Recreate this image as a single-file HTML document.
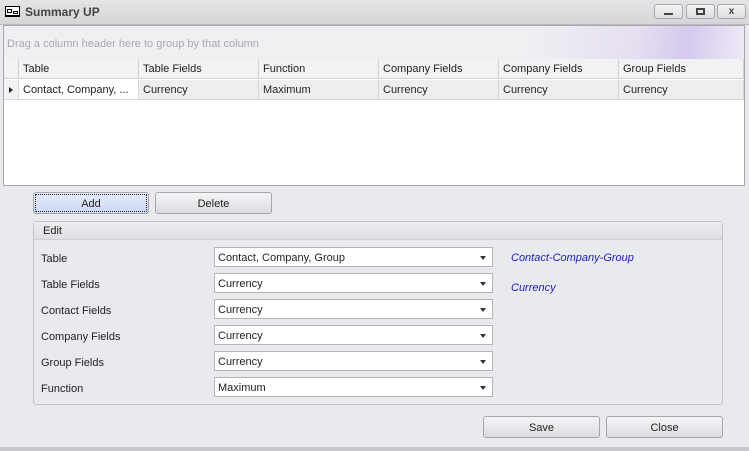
<!DOCTYPE html>
<html><head><style>
*{box-sizing:border-box;margin:0;padding:0}
body{width:749px;height:451px;background:#e9eaee;font-family:"Liberation Sans",sans-serif;font-size:11px;color:#222;position:relative;overflow:hidden}
.a{position:absolute}
.title{left:0;top:0;width:749px;height:25px;background:linear-gradient(#e4e4e6,#d6d6d9);border-bottom:1px solid #b9b9bd}
.tb{top:4px;width:29px;height:15px;border:1px solid #a8a8ad;border-radius:3px;background:linear-gradient(#f4f4f5,#dedee1)}
.grid{left:3px;top:25px;width:742px;height:161px;background:#fff;border:1px solid #a9a9ad}
.grp{left:0;top:0;width:740px;height:33px;background:linear-gradient(100deg,#f0f0f3 70%,#e6dff0 85%,#d5c9ee 92%,#efeaf7 100%);color:#a8a8b0;padding:12px 0 0 3px}
.hdr{top:33px;height:20px;background:#f2f2f4;border-right:1px solid #d3d3d6;border-bottom:1px solid #d3d3d6;padding:4px 0 0 4px}
.cell{top:54px;height:20px;background:#eeeef1;border-right:1px solid #d8d8db;border-bottom:1px solid #d8d8db;padding:4px 0 0 4px}
.btn{height:22px;border:1px solid #a6a6ab;border-radius:3px;background:linear-gradient(#f5f5f7,#dcdce0);text-align:center;padding-top:5px}
.lbl{left:41px;margin-top:1px}
.cb{left:214px;width:279px;height:20px;background:#fff;border:1px solid #b5b5b9;padding:4px 0 0 3px}
.cb:after{content:"";position:absolute;right:6px;top:8px;border-left:3.5px solid transparent;border-right:3.5px solid transparent;border-top:4px solid #333}
.blue{color:#1a1acc;font-style:italic;left:511px}
</style></head><body>
<div class="a title">
<div class="a" style="left:5px;top:6px;width:15px;height:11px;border:1px solid #000;background:#fff"><div class="a" style="left:1px;top:2px;width:5px;height:4px;border:1px solid #000"></div><div class="a" style="left:7px;top:4px;width:5px;height:3px;border:1px solid #000"></div><div class="a" style="left:0;top:8px;width:13px;height:1px;background:#000"></div></div>
<div class="a" style="left:25px;top:5px;font-weight:bold;color:#444;font-size:12px">Summary UP</div>
<div class="a tb" style="left:654px"><div class="a" style="left:9px;top:8px;width:9px;height:2px;background:#444"></div></div>
<div class="a tb" style="left:686px"><div class="a" style="left:9px;top:3px;width:9px;height:7px;border:2px solid #444"></div></div>
<div class="a tb" style="left:717px;text-align:center;font-weight:bold;color:#444;font-size:10px;padding-top:1px">x</div>
</div>
<div class="a grid">
<div class="a grp">Drag a column header here to group by that column</div>
<div class="a hdr" style="left:0;width:15px"></div>
<div class="a hdr" style="left:15px;width:120px">Table</div>
<div class="a hdr" style="left:135px;width:120px">Table Fields</div>
<div class="a hdr" style="left:255px;width:120px">Function</div>
<div class="a hdr" style="left:375px;width:120px">Company Fields</div>
<div class="a hdr" style="left:495px;width:120px">Company Fields</div>
<div class="a hdr" style="left:615px;width:125px">Group Fields</div>
<div class="a cell" style="left:0;width:15px;background:#f2f2f4"><div class="a" style="left:5px;top:7px;border-top:3px solid transparent;border-bottom:3px solid transparent;border-left:4px solid #222"></div></div>
<div class="a cell" style="left:15px;width:120px;background:#fff">Contact, Company, ...</div>
<div class="a cell" style="left:135px;width:120px">Currency</div>
<div class="a cell" style="left:255px;width:120px">Maximum</div>
<div class="a cell" style="left:375px;width:120px">Currency</div>
<div class="a cell" style="left:495px;width:120px">Currency</div>
<div class="a cell" style="left:615px;width:125px">Currency</div>
</div>
<div class="a btn" style="left:33px;top:192px;width:116px;background:linear-gradient(#e6ecfb,#ccd8f6);outline:1px dotted #222;outline-offset:-3px">Add</div>
<div class="a btn" style="left:155px;top:192px;width:117px">Delete</div>
<div class="a" style="left:33px;top:221px;width:690px;height:184px;border:1px solid #c3c3c8;border-radius:3px">
<div class="a" style="left:0;top:0;width:688px;height:18px;background:linear-gradient(#ececef,#e0e0e4);border-bottom:1px solid #d0d0d4;padding:3px 0 0 9px">Edit</div>
</div>
<div class="a lbl" style="top:252px">Table</div>
<div class="a lbl" style="top:278px">Table Fields</div>
<div class="a lbl" style="top:304px">Contact Fields</div>
<div class="a lbl" style="top:330px">Company Fields</div>
<div class="a lbl" style="top:356px">Group Fields</div>
<div class="a lbl" style="top:382px">Function</div>
<div class="a cb" style="top:247px">Contact, Company, Group</div>
<div class="a cb" style="top:273px">Currency</div>
<div class="a cb" style="top:299px">Currency</div>
<div class="a cb" style="top:325px">Currency</div>
<div class="a cb" style="top:351px">Currency</div>
<div class="a cb" style="top:377px">Maximum</div>
<div class="a blue" style="top:252px">Contact-Company-Group</div>
<div class="a blue" style="top:282px">Currency</div>
<div class="a btn" style="left:483px;top:416px;width:117px">Save</div>
<div class="a btn" style="left:606px;top:416px;width:117px">Close</div>
<div class="a" style="left:0;top:447px;width:749px;height:4px;background:#c9c9cd"></div>
</body></html>
